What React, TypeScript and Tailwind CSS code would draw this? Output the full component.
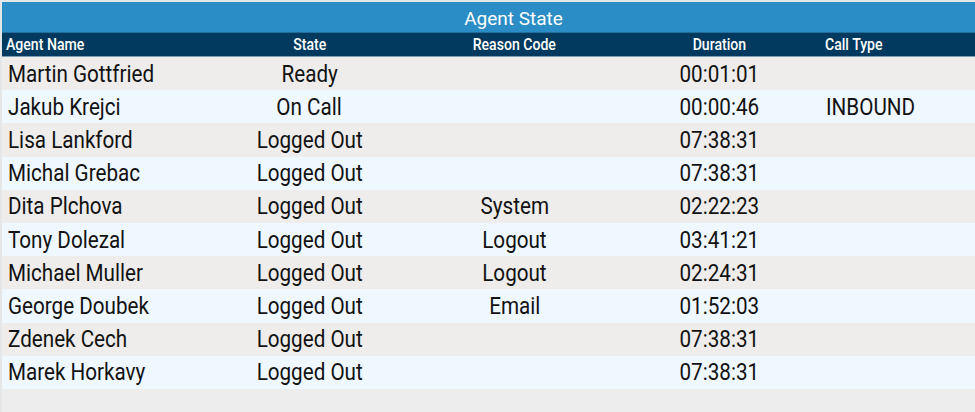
import React from "react";

type Row = { name: string; state: string; reason: string; duration: string; callType: string };

const rows: Row[] = [
  { name: "Martin Gottfried", state: "Ready", reason: "", duration: "00:01:01", callType: "" },
  { name: "Jakub Krejci", state: "On Call", reason: "", duration: "00:00:46", callType: "INBOUND" },
  { name: "Lisa Lankford", state: "Logged Out", reason: "", duration: "07:38:31", callType: "" },
  { name: "Michal Grebac", state: "Logged Out", reason: "", duration: "07:38:31", callType: "" },
  { name: "Dita Plchova", state: "Logged Out", reason: "System", duration: "02:22:23", callType: "" },
  { name: "Tony Dolezal", state: "Logged Out", reason: "Logout", duration: "03:41:21", callType: "" },
  { name: "Michael Muller", state: "Logged Out", reason: "Logout", duration: "02:24:31", callType: "" },
  { name: "George Doubek", state: "Logged Out", reason: "Email", duration: "01:52:03", callType: "" },
  { name: "Zdenek Cech", state: "Logged Out", reason: "", duration: "07:38:31", callType: "" },
  { name: "Marek Horkavy", state: "Logged Out", reason: "", duration: "07:38:31", callType: "" },
];

const cols = "grid grid-cols-[205px_205px_205px_205px_1fr]";

function HeadCell({ children, align }: { children: string; align: "left" | "center" }) {
  return (
    <div className={align === "center" ? "flex items-center justify-center" : "flex items-center"}>
      <span
        className={
          align === "center"
            ? "inline-block scale-x-[0.88] origin-center whitespace-nowrap"
            : "inline-block scale-x-[0.88] origin-left whitespace-nowrap"
        }
      >
        {children}
      </span>
    </div>
  );
}

function Cell({ children, align }: { children: string; align: "left" | "center" }) {
  return (
    <div className={align === "center" ? "flex items-center justify-center" : "flex items-center"}>
      <span
        className={
          align === "center"
            ? "inline-block scale-x-[0.86] origin-center whitespace-nowrap"
            : "inline-block scale-x-[0.86] origin-left whitespace-nowrap"
        }
      >
        {children}
      </span>
    </div>
  );
}

export default function App() {
  return (
    <div className="w-[975px] h-[412px] bg-[#ededed] overflow-hidden font-['Roboto',sans-serif] border-t-2 border-l-2 border-[#e4e6e8]">
      <div className="h-[31px] bg-[#2b8dc5] border-b border-[#1f6e9c] flex items-center justify-center pl-[50px] text-white text-[19px] leading-none">
        <span className="inline-block translate-y-[1px]">Agent State</span>
      </div>
      <div className={`${cols} h-[24px] bg-[#013a5e] border-b border-[#7f9db1] text-white text-[16px] font-medium leading-none`}>
        <div className="pl-[4px] flex">
          <HeadCell align="left">Agent Name</HeadCell>
        </div>
        <HeadCell align="center">State</HeadCell>
        <HeadCell align="center">Reason Code</HeadCell>
        <HeadCell align="center">Duration</HeadCell>
        <div className="pl-[3px] flex">
          <HeadCell align="left">Call Type</HeadCell>
        </div>
      </div>
      {rows.map((r, i) => (
        <div
          key={i}
          className={`${cols} h-[33.2px] text-[24px] leading-none text-[#121212] ${i % 2 === 0 ? "bg-[#eeedec]" : "bg-[#f0f8ff]"}`}
        >
          <div className="pl-[6px] flex">
            <Cell align="left">{r.name}</Cell>
          </div>
          <Cell align="center">{r.state}</Cell>
          <Cell align="center">{r.reason}</Cell>
          <Cell align="center">{r.duration}</Cell>
          <div className="pl-[4px] flex">
            <Cell align="left">{r.callType}</Cell>
          </div>
        </div>
      ))}
    </div>
  );
}
